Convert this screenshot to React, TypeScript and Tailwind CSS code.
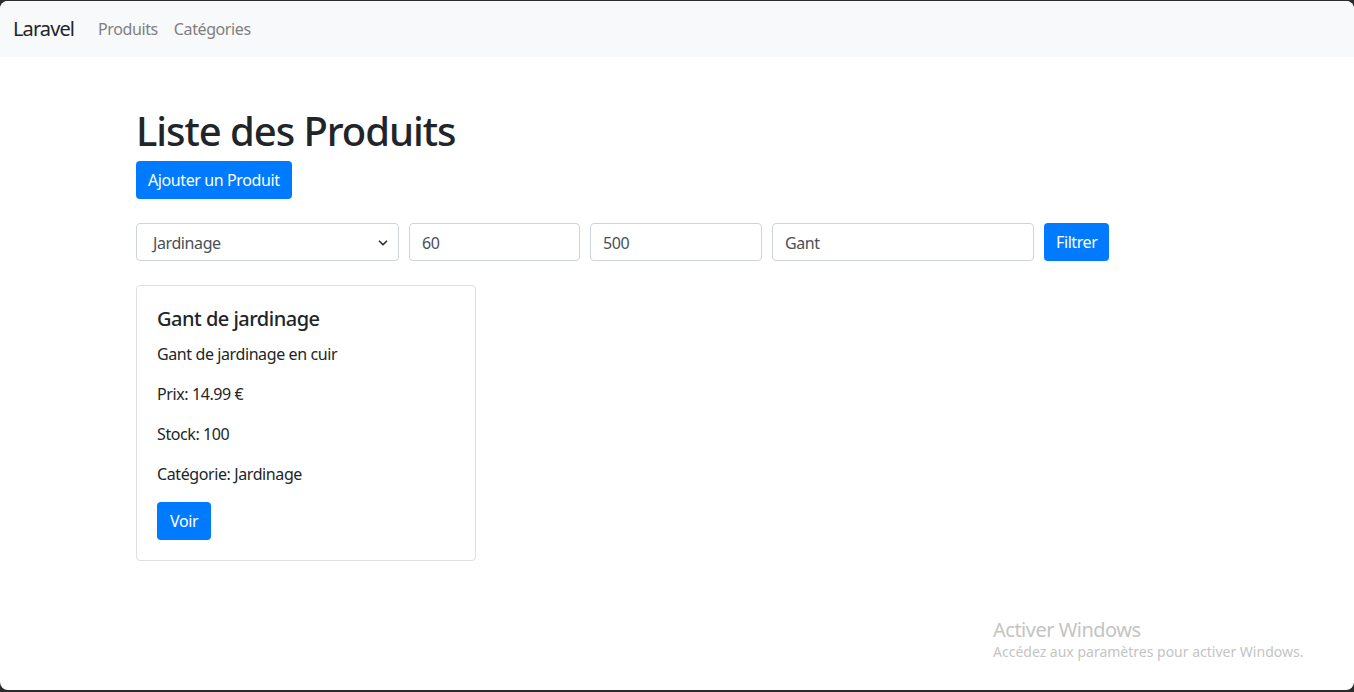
import { ChevronDown } from "lucide-react";

const font = { fontFamily: '"Segoe UI", "Noto Sans", "Liberation Sans", sans-serif' };

function Navbar() {
  return (
    <nav className="flex h-[56px] items-center bg-[#f8f9fa] pl-[13px] pr-4 tracking-[-0.4px]">
      <a className="mr-4 text-[20px] leading-[30px] tracking-[-0.9px] text-[#212529]">Laravel</a>
      <a className="px-2 text-[16px] text-[#808080]">Produits</a>
      <a className="px-2 text-[16px] text-[#808080]">Catégories</a>
    </nav>
  );
}

function Field({ value, w }: { value: string; w: string }) {
  return (
    <div
      className={`${w} flex h-[38px] items-center rounded border border-[#ced4da] bg-white px-3 pt-px text-[16px] text-[#495057]`}
    >
      {value}
    </div>
  );
}

function ProductCard() {
  return (
    <div className="w-[340px] rounded border border-[#dfdfdf] p-5 text-[16px] leading-6 text-[#212529]">
      <h5 className="mb-[11px] pt-px text-[20px] font-medium leading-6 tracking-[-0.5px]">Gant de jardinage</h5>
      <p className="mb-4">Gant de jardinage en cuir</p>
      <p className="mb-4">Prix: 14.99 €</p>
      <p className="mb-4">Stock: 100</p>
      <p className="mb-4">Catégorie: Jardinage</p>
      <button className="h-[38px] rounded bg-[#007bff] px-[13px] text-[16px] text-white">Voir</button>
    </div>
  );
}

export default function App() {
  return (
    <div className="h-[692px] overflow-hidden bg-[#2b2b2b] pt-px pb-[2px]" style={font}>
      <div className="relative h-full overflow-hidden rounded-[8px] bg-white tracking-[-0.4px]">
        <Navbar />
        <main className="mx-auto mt-12 w-[1082px]">
          <h1 className="mb-[6px] pt-[2px] text-[40px] font-medium leading-[48px] tracking-[-1.05px] text-[#212529]">
            Liste des Produits
          </h1>
          <button className="h-[38px] rounded bg-[#007bff] px-3 text-[16px] text-white">
            Ajouter un Produit
          </button>

          <div className="mt-6 flex items-center gap-[10px]">
            <div className="flex h-[38px] w-[263px] items-center justify-between rounded border border-[#ced4da] bg-white pl-4 pr-2 pt-px text-[16px] text-[#495057]">
              <span>Jardinage</span>
              <ChevronDown size={14} strokeWidth={3} className="text-[#333]" />
            </div>
            <Field value="60" w="w-[171px]" />
            <Field value="500" w="w-[172px]" />
            <Field value="Gant" w="w-[262px]" />
            <button className="h-[38px] rounded bg-[#007bff] px-3 text-[16px] text-white">
              Filtrer
            </button>
          </div>

          <div className="mt-6">
            <ProductCard />
          </div>
        </main>

        <div className="absolute left-[993px] top-[617px] text-[#c4c4c4]">
          <div className="text-[20px] leading-6 tracking-[-0.5px]">Activer Windows</div>
          <div className="text-[14px] leading-5 tracking-[0px]">Accédez aux paramètres pour activer Windows.</div>
        </div>
      </div>
    </div>
  );
}
